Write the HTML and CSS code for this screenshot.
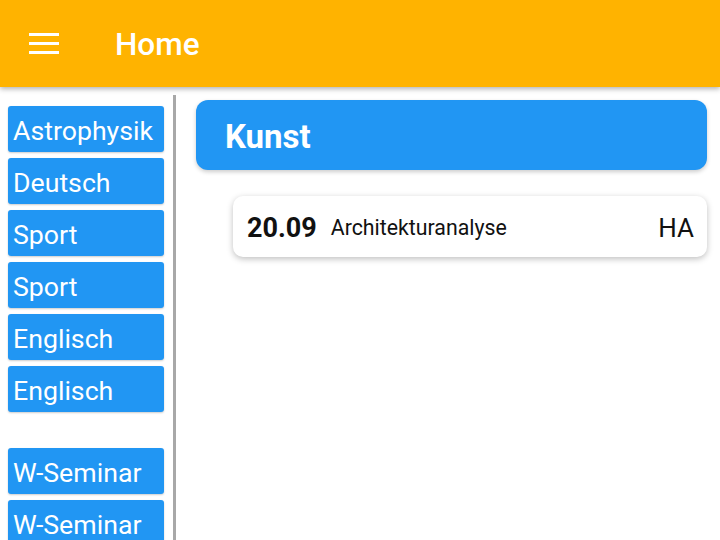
FILE: index.html
```html
<!DOCTYPE html>
<html>
<head>
<meta charset="utf-8">
<link rel="stylesheet" href="styles.css">
</head>
<body>
<header class="appbar">
  <svg class="menu" width="30" height="22" viewBox="0 0 30 22"><rect x="0" y="1" width="30" height="3" fill="#fff"/><rect x="0" y="10" width="30" height="3" fill="#fff"/><rect x="0" y="19" width="30" height="3" fill="#fff"/></svg>
  <h1 class="title">Home</h1>
</header>
<div class="main">
  <nav class="side">
    <div class="btn">Astrophysik</div>
    <div class="btn">Deutsch</div>
    <div class="btn">Sport</div>
    <div class="btn">Sport</div>
    <div class="btn">Englisch</div>
    <div class="btn">Englisch</div>
    <div class="spacer"></div>
    <div class="btn">W-Seminar</div>
    <div class="btn">W-Seminar</div>
  </nav>
  <div class="divider"></div>
  <section class="content">
    <div class="subject">Kunst</div>
    <div class="task">
      <span class="date">20.09</span>
      <span class="name">Architekturanalyse</span>
      <span class="type">HA</span>
    </div>
  </section>
</div>
</body>
</html>
```
FILE: styles.css
```css
html, body { margin: 0; padding: 0; }
body {
  width: 720px; height: 540px; overflow: hidden; background: #fff;
  font-family: Roboto, "Liberation Sans", sans-serif;
}
.appbar {
  height: 87px; background: #FFB300; display: flex; align-items: center;
  box-shadow: 0 2px 5px rgba(0,0,0,0.3); position: relative; z-index: 2;
}
.menu { margin-left: 29px; margin-top: -2px; }
.title { margin: 0 0 0 56px; color: #fff; font-size: 31.5px; font-weight: 500; margin-top: 2px; }
.main { display: flex; height: 453px; }
.side { width: 156px; padding: 19px 0 0 8px; display: flex; flex-direction: column; gap: 6px; }
.btn {
  height: 46px; background: #2196F3; color: #fff; border-radius: 3px;
  font-size: 26.7px; line-height: 50px; padding-left: 5px; box-sizing: border-box;
  box-shadow: 0 1px 2px rgba(0,0,0,0.2); flex: none; white-space: nowrap; overflow: hidden;
}
.spacer { height: 24px; flex: none; }
.divider { width: 3px; background: #a8a8a8; margin: 8px 0 0 9px; }
.content { flex: 1; padding: 13px 13px 0 20px; }
.subject {
  height: 70px; background: #2196F3; border-radius: 12px; color: #fff;
  font-size: 33px; font-weight: 700; padding-left: 29px; line-height: 74px;
  box-shadow: 0 2px 4px rgba(0,0,0,0.2);
}
.task {
  margin: 26px 0 0 37px; height: 61px; background: #fff; border-radius: 10px;
  box-shadow: 0 2px 6px rgba(0,0,0,0.25); display: flex; align-items: center;
  padding: 2px 13px 0 14px; box-sizing: border-box;
}
.date { font-size: 27px; font-weight: 700; color: #111; }
.name { font-size: 21.3px; color: #111; margin-left: 14px; flex: 1; }
.type { font-size: 26px; color: #111; }
```
